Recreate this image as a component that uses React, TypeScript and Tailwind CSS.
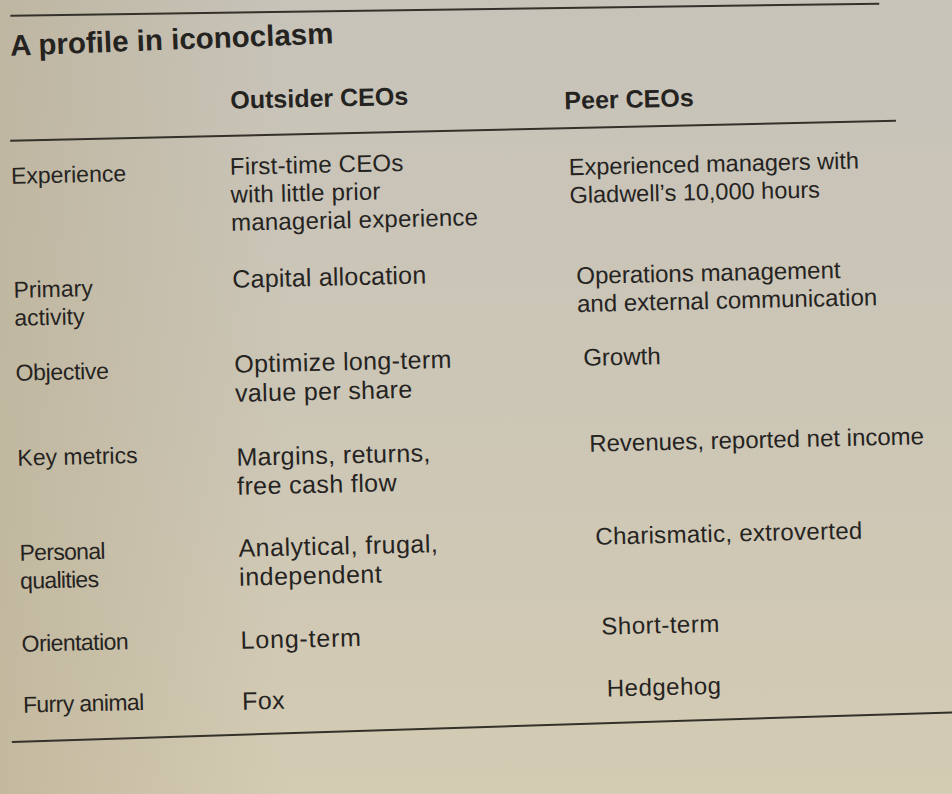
type Row = {
  label: string[]
  outsider: string[]
  peer: string[]
  height: string
  labelCls: string
  outsiderCls: string
  peerCls: string
}

// offsets and tracking follow the page's curl in the photo, so each cell gets its own
const rows: Row[] = [
  {
    label: ['Experience'],
    outsider: ['First-time CEOs', 'with little prior', 'managerial experience'],
    peer: ['Experienced managers with', 'Gladwell’s 10,000 hours'],
    height: 'h-[110px]',
    labelCls: 'pt-[4px]',
    outsiderCls: 'pt-0 text-[24px] tracking-[0.2px]',
    peerCls: 'pt-[8px] pl-0 text-[23.5px]',
  },
  {
    label: ['Primary', 'activity'],
    outsider: ['Capital allocation'],
    peer: ['Operations management', 'and external communication'],
    height: 'h-[86px]',
    labelCls: 'pt-[8px]',
    outsiderCls: 'pt-[2px] text-[25px] leading-[29px] tracking-[0.2px]',
    peerCls: 'pt-[7px] pl-[5px] text-[24px]',
  },
  {
    label: ['Objective'],
    outsider: ['Optimize long-term', 'value per share'],
    peer: ['Growth'],
    height: 'h-[87px]',
    labelCls: 'pt-[5px] tracking-[-0.3px]',
    outsiderCls: 'pt-[1px] text-[25px] leading-[29px] tracking-[0.35px]',
    peerCls: 'pt-[3px] pl-[10px] text-[24px]',
  },
  {
    label: ['Key metrics'],
    outsider: ['Margins, returns,', 'free cash flow'],
    peer: ['Revenues, reported net income'],
    height: 'h-[93px]',
    labelCls: 'pt-[3px]',
    outsiderCls: 'pt-[7px] text-[25px] leading-[29px] tracking-[0.4px]',
    peerCls: 'pt-[2px] pl-[14px] text-[24px]',
  },
  {
    label: ['Personal', 'qualities'],
    outsider: ['Analytical, frugal,', 'independent'],
    peer: ['Charismatic, extroverted'],
    height: 'h-[92px]',
    labelCls: 'pt-[5px] tracking-[-0.7px]',
    outsiderCls: 'pt-[5px] text-[25px] leading-[29px] tracking-[0.5px]',
    peerCls: 'pt-[2px] pl-[18px] text-[24px] tracking-[0.3px]',
  },
  {
    label: ['Orientation'],
    outsider: ['Long-term'],
    peer: ['Short-term'],
    height: 'h-[62px]',
    labelCls: 'pt-[4px] tracking-[-0.55px]',
    outsiderCls: 'pt-[5px] text-[25px] leading-[29px] tracking-[0.8px]',
    peerCls: 'pt-0 pl-[22px] text-[24px] tracking-[0.5px]',
  },
  {
    label: ['Furry animal'],
    outsider: ['Fox'],
    peer: ['Hedgehog'],
    height: 'h-[34px]',
    labelCls: 'pt-[3px] tracking-[-0.6px]',
    outsiderCls: 'pt-[4px] text-[25px] leading-[29px] tracking-[0.5px]',
    peerCls: 'pt-0 pl-[26px] text-[24px] tracking-[0.5px]',
  },
]

function Lines({ lines }: { lines: string[] }) {
  return (
    <div className="whitespace-nowrap">
      {lines.map((line) => (
        <div key={line}>{line}</div>
      ))}
    </div>
  )
}

export default function App() {
  return (
    <div className="h-[794px] w-full overflow-hidden bg-linear-to-b from-[#c7c3b9] via-[#ccc6b6] to-[#d4cbb3] font-['Liberation_Sans',Arial,sans-serif] text-[#25231f]">
      <div className="h-full w-full bg-linear-to-r from-[#b9ae92]/60 via-transparent via-30% to-transparent">
        <div className="w-[952px] -rotate-[1.3deg] origin-top-left pl-[7px] pt-[15px]">
          <div className="ml-[3px] h-[2px] w-[869px] rotate-[0.5deg] origin-left bg-[#34312b]" />

          <h1 className="mt-[13px] ml-[2px] w-max -rotate-[0.9deg] origin-left text-[29.5px] leading-[32px] font-bold">
            A profile in iconoclasm
          </h1>

          <div className="-mt-[2px] grid grid-cols-[219px_339px_1fr] text-[25px] leading-[28px] font-bold">
            <div />
            <div className="pt-[31px] pl-[2px]">Outsider CEOs</div>
            <div className="pt-[39px] -ml-[3px]">Peer CEOs</div>
          </div>

          <div className="mt-[13px] h-[2px] w-[886px] bg-[#34312b]" />

          <div className="pt-[16px] text-[23px] leading-[28px]">
            {rows.map((row) => (
              <div
                key={row.label.join(' ')}
                className={`grid grid-cols-[219px_339px_1fr] ${row.height}`}
              >
                <div className={row.labelCls}>
                  <Lines lines={row.label} />
                </div>
                <div className={row.outsiderCls}>
                  <Lines lines={row.outsider} />
                </div>
                <div className={row.peerCls}>
                  <Lines lines={row.peer} />
                </div>
              </div>
            ))}
          </div>

          <div className="mt-[19px] -ml-[12px] h-[2px] w-[1000px] -rotate-[0.5deg] origin-left bg-[#34312b]" />
        </div>
      </div>
    </div>
  )
}
